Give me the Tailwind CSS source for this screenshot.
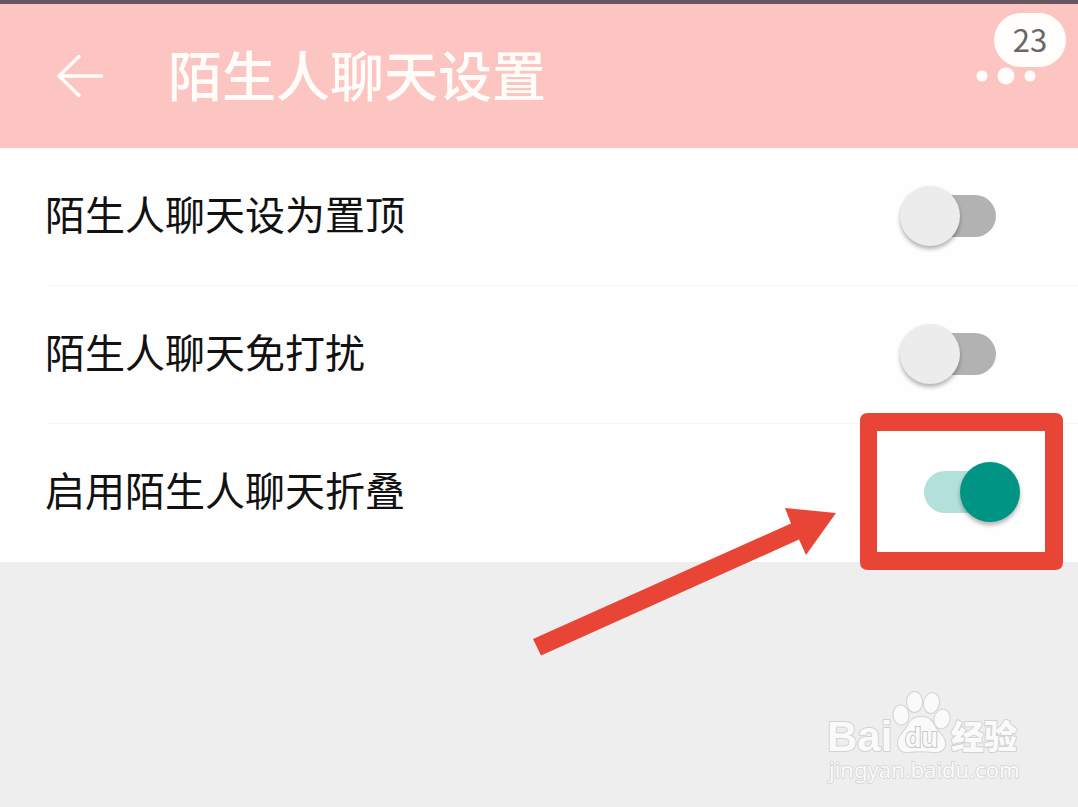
<!DOCTYPE html>
<html lang="zh-CN">
<head>
<meta charset="utf-8">
<meta name="viewport" content="width=device-width, initial-scale=1">
<title>陌生人聊天设置</title>
<script src="https://cdn.jsdelivr.net/npm/@tailwindcss/browser@4"></script>
</head>
<body class="relative flex min-h-screen flex-col overflow-x-hidden bg-[#eeeeee] font-['Noto_Sans_CJK_SC',sans-serif] text-[#111111]">
  <header class="flex h-[148px] items-center border-t-4 border-[#67565f] bg-[#fdc5c2] pr-10 pl-14">
    <button type="button" aria-label="返回" class="shrink-0">
      <svg class="block h-12 w-12" viewBox="0 0 48 48" fill="none" stroke="#fffdfa" stroke-width="3.4" stroke-linecap="round" stroke-linejoin="round"><path d="M45.500 24H3M23 4.500L3 24l20 19.500"/></svg>
    </button>
    <h1 class="ml-16 flex-1 pb-1 text-[54px] leading-[72px] font-medium whitespace-nowrap text-[#fffdfa]">陌生人聊天设置</h1>
    <button type="button" aria-label="更多，23 条消息" class="relative shrink-0">
      <svg class="block h-6 w-16" viewBox="0 0 64 24" fill="#fffdfc"><circle cx="8" cy="12" r="5.500"/><circle cx="32" cy="12" r="8.500"/><circle cx="56" cy="12" r="5.500"/></svg>
      <span class="absolute -top-[51px] -right-7 flex h-[54px] w-[72px] items-center justify-center rounded-full bg-[#fffefd] pb-1 text-[31px] leading-none text-[#696766]">23</span>
    </button>
  </header>

  <main class="bg-[#fefefe]">
    <div class="flex h-[138px] items-center pr-[58px] pb-0.5 pl-[45px]">
      <label for="pin" class="flex-1 pb-1.5 text-[40px] leading-[60px]">陌生人聊天设为置顶</label>
      <input id="pin" type="checkbox" role="switch" class="relative h-[60px] w-[120px] shrink-0 appearance-none before:absolute before:top-[9px] before:left-6 before:h-[42px] before:w-[72px] before:rounded-full before:bg-[#b2b2b2] after:absolute after:top-0 after:left-0 after:h-[60px] after:w-[60px] after:rounded-full after:bg-[#ececec] after:shadow-[0_3px_4px_rgba(0,0,0,0.3)] checked:before:bg-[#b2e0da] checked:after:left-[60px] checked:after:bg-[#009485]">
    </div>
    <hr class="-mt-px ml-12 border-t border-[#f5f5f5]">
    <div class="flex h-[138px] items-center pr-[58px] pb-0.5 pl-[45px]">
      <label for="mute" class="flex-1 pb-1.5 text-[40px] leading-[60px]">陌生人聊天免打扰</label>
      <input id="mute" type="checkbox" role="switch" class="relative h-[60px] w-[120px] shrink-0 appearance-none before:absolute before:top-[9px] before:left-6 before:h-[42px] before:w-[72px] before:rounded-full before:bg-[#b2b2b2] after:absolute after:top-0 after:left-0 after:h-[60px] after:w-[60px] after:rounded-full after:bg-[#ececec] after:shadow-[0_3px_4px_rgba(0,0,0,0.3)] checked:before:bg-[#b2e0da] checked:after:left-[60px] checked:after:bg-[#009485]">
    </div>
    <hr class="-mt-px ml-12 border-t border-[#f5f5f5]">
    <div class="flex h-[138px] items-center pr-[58px] pb-0.5 pl-[45px]">
      <label for="fold" class="flex-1 pb-1.5 text-[40px] leading-[60px]">启用陌生人聊天折叠</label>
      <div class="relative flex shrink-0">
        <input id="fold" type="checkbox" role="switch" checked class="relative h-[60px] w-[120px] shrink-0 appearance-none before:absolute before:top-[9px] before:left-6 before:h-[42px] before:w-[72px] before:rounded-full before:bg-[#b2b2b2] after:absolute after:top-0 after:left-0 after:h-[60px] after:w-[60px] after:rounded-full after:bg-[#ececec] after:shadow-[0_3px_4px_rgba(0,0,0,0.3)] checked:before:bg-[#b2e0da] checked:after:left-[60px] checked:after:bg-[#009485]">
        <!-- Highlight frame and pointer arrow around the switch -->
        <svg class="pointer-events-none absolute -top-[52px] -left-[370px] h-[250px] w-[540px] max-w-none" viewBox="530 410 540 250" aria-hidden="true">
          <path fill="#e84537" fill-rule="evenodd" d="M868 413H1055Q1063 413 1063 421V562Q1063 570 1055 570H868Q860 570 860 562V421Q860 413 868 413ZM877 431V552H1045V431Z"/>
          <path fill="#e84537" d="M533 639L791 523.500L785 508L836 513L806 555L799 539.500L541 655.500Z"/>
        </svg>
      </div>
    </div>
  </main>

  <!-- Watermark -->
  <svg class="absolute right-[50px] bottom-[19px] h-[100px] w-[206px]" viewBox="822 688 206 100" role="img" aria-label="Baidu 经验 jingyan.baidu.com">
    <g fill="#fafafa" stroke="#d2d2d2" stroke-width="2" paint-order="stroke" stroke-linejoin="round">
      <ellipse cx="901" cy="715" rx="7.500" ry="9.500" transform="rotate(-8 901 715)"/>
      <ellipse cx="914.500" cy="702" rx="7.500" ry="10"/>
      <ellipse cx="931.500" cy="703" rx="7.500" ry="10" transform="rotate(12 931.500 703)"/>
      <ellipse cx="942" cy="719" rx="7.500" ry="9.500" transform="rotate(14 942 719)"/>
      <path d="M921 717C911 717 909 724 905 730C901 735 898 738 898 743C898 750 903 753 909 752C917 751 925 751 933 752C941 753 946 749 945 742C944 736 940 734 937 730C933 723 931 717 921 717Z"/>
      <text x="827" y="751" font-size="42" font-weight="700" font-family="'Liberation Sans', sans-serif">Bai</text>
      <text x="951" y="749" font-size="33" font-weight="900" font-family="'Noto Sans CJK SC', sans-serif">经验</text>
      <text x="829" y="778" font-size="22" stroke-width="1.500" font-family="'Noto Sans', sans-serif">jingyan.baidu.com</text>
    </g>
    <text x="905" y="747" font-size="27" fill="#fafafa" font-family="'Liberation Sans', sans-serif" font-weight="700" stroke="#c6c6c6" stroke-width="2" paint-order="stroke">du</text>
  </svg>
</body>
</html>
